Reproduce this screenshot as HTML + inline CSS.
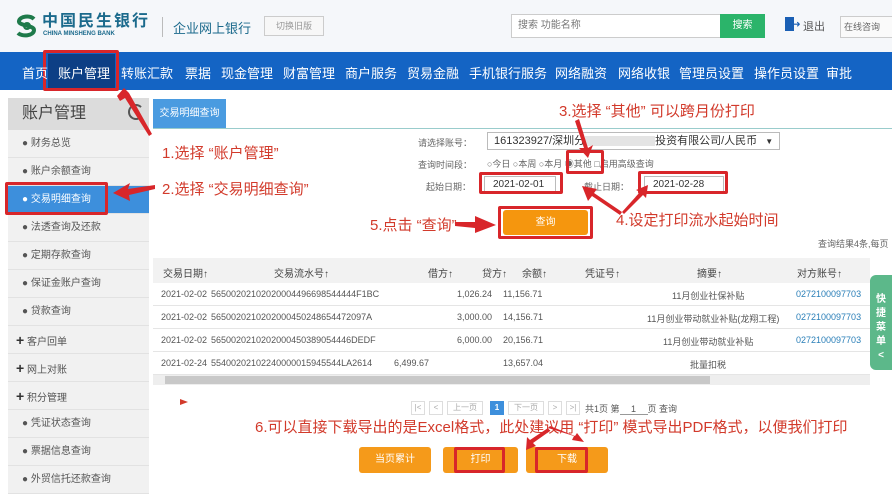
<!DOCTYPE html>
<html><head><meta charset="utf-8"><style>
*{margin:0;padding:0;box-sizing:border-box}
body{width:892px;height:483px;overflow:hidden;background:#fff;font-family:"Liberation Sans","Noto Sans CJK SC",sans-serif;position:relative;color:#555}
.a{position:absolute;white-space:nowrap}
.nav span{position:absolute;top:63px;color:#fff;font-size:13px}
.side{position:absolute;left:8px;width:141px;height:28px;border-bottom:1px solid #e2e2e2;background:#f1f1f1;font-size:10px;color:#555;padding-left:14px;line-height:28px}
.red{color:#d23a2b;font-size:15px}
.rb{position:absolute;border:3px solid #d8262a;border-radius:2px}
.th{position:absolute;top:265px;font-size:10px;color:#444}
.td{position:absolute;font-size:9px;color:#555}
.ob{position:absolute;background:#f59a1a;color:#fff;font-size:10px;text-align:center;border-radius:3px;line-height:26px}
.pg{position:absolute;top:401px;height:14px;border:1px solid #ddd;font-size:8px;color:#aaa;text-align:center;line-height:12px}
</style></head><body>
<div class="a" style="left:0;top:0;width:892px;height:52px;background:#f5f7fa"></div>
<svg class="a" style="left:14px;top:14px" width="26" height="24" viewBox="0 0 26 24"><path d="M20 5C16 1 6 2 5 7 4 12 20 11 20 16 20 22 8 23 4 19" fill="none" stroke="#1e7a4a" stroke-width="4"/><circle cx="13" cy="12" r="3" fill="none" stroke="#1e7a4a" stroke-width="2"/></svg>
<div class="a" style="left:42px;top:14px;font-size:16px;line-height:16px;font-weight:bold;color:#1b6a8c;letter-spacing:2px">中国民生银行</div>
<div class="a" style="left:43px;top:31px;font-size:6px;line-height:6px;font-weight:bold;color:#1b6a8c">CHINA MINSHENG BANK</div>
<div class="a" style="left:162px;top:17px;width:1px;height:20px;background:#bbb"></div>
<div class="a" style="left:173px;top:18px;font-size:13px;color:#1b6a8c">企业网上银行</div>
<div class="a" style="left:264px;top:16px;width:60px;height:20px;border:1px solid #ccc;background:#f7f7f7;font-size:9px;color:#999;text-align:center;line-height:18px">切换旧版</div>
<div class="a" style="left:511px;top:14px;width:210px;height:24px;border:1px solid #ccc;background:#fff;font-size:10px;color:#777;padding-left:6px;line-height:22px">搜索 功能名称</div>
<div class="a" style="left:720px;top:14px;width:45px;height:24px;background:#2bb46a;color:#fff;font-size:10px;text-align:center;line-height:24px">搜索</div>
<div class="a" style="left:785px;top:17px;width:9px;height:14px;background:#1a5fb4"></div>
<div class="a" style="left:793px;top:19px;font-size:9px;color:#1a5fb4">➜</div>
<div class="a" style="left:803px;top:18px;font-size:11px;color:#555">退出</div>
<div class="a" style="left:840px;top:16px;width:55px;height:22px;border:1px solid #ccc;background:#fafafa;font-size:9px;color:#666;padding-left:3px;line-height:20px">在线咨询</div>
<div class="a" style="left:0;top:52px;width:892px;height:38px;background:#1464c4"></div>
<div class="a" style="left:48px;top:54px;width:67px;height:34px;background:#0d3f85"></div>
<div class="rb" style="left:43px;top:50px;width:76px;height:41px"></div>
<div class="nav">
<span style="left:22px">首页</span><span style="left:58px">账户管理</span><span style="left:121px">转账汇款</span><span style="left:185px">票据</span><span style="left:221px">现金管理</span><span style="left:283px">财富管理</span><span style="left:345px">商户服务</span><span style="left:407px">贸易金融</span><span style="left:469px">手机银行服务</span><span style="left:555px">网络融资</span><span style="left:618px">网络收银</span><span style="left:679px">管理员设置</span><span style="left:754px">操作员设置</span><span style="left:826px">审批</span>
</div>
<div class="a" style="left:8px;top:98px;width:141px;height:32px;background:#dcdcdc;font-size:16px;color:#444;padding-left:14px;line-height:32px">账户管理</div>
<div class="a" style="left:128px;top:104px;width:16px;height:16px;border:2px solid #555;border-radius:50%;border-right-color:transparent"></div>
<div class="side" style="top:130px">● 财务总览</div>
<div class="side" style="top:158px">● 账户余额查询</div>
<div class="side" style="top:186px;background:#3d8fdc;color:#fff">● 交易明细查询</div>
<div class="side" style="top:214px">● 法透查询及还款</div>
<div class="side" style="top:242px">● 定期存款查询</div>
<div class="side" style="top:270px">● 保证金账户查询</div>
<div class="side" style="top:298px">● 贷款查询</div>
<div class="side" style="top:326px;padding-left:8px"><b style="font-size:14px;color:#333">+</b> 客户回单</div>
<div class="side" style="top:354px;padding-left:8px"><b style="font-size:14px;color:#333">+</b> 网上对账</div>
<div class="side" style="top:382px;padding-left:8px"><b style="font-size:14px;color:#333">+</b> 积分管理</div>
<div class="side" style="top:410px">● 凭证状态查询</div>
<div class="side" style="top:438px">● 票据信息查询</div>
<div class="side" style="top:466px">● 外贸信托还款查询</div>
<div class="rb" style="left:5px;top:182px;width:103px;height:33px"></div>
<div class="a" style="left:153px;top:99px;width:73px;height:30px;background:#4a9be0;color:#fff;font-size:10px;text-align:center;line-height:30px">交易明细查询</div>
<div class="a" style="left:153px;top:128px;width:739px;height:1px;background:#9cc"></div>
<div class="a" style="left:418px;top:136px;font-size:9px;color:#666">请选择账号：</div>
<div class="a" style="left:487px;top:132px;width:293px;height:18px;border:1px solid #bbb;font-size:11px;color:#333;padding-left:6px;line-height:16px">161323927/深圳分<span style="display:inline-block;width:70px;height:10px;background:#e4e4e4;vertical-align:middle"></span>投资有限公司/人民币<span style="font-size:8px;margin-left:8px">▼</span></div>
<div class="a" style="left:418px;top:158px;font-size:9px;color:#666">查询时间段：</div>
<div class="a" style="left:487px;top:157px;font-size:9px;color:#666">○今日 ○本周 ○本月 ◉其他 □启用高级查询</div>
<div class="a" style="left:426px;top:180px;font-size:9px;color:#666">起始日期：</div>
<div class="a" style="left:584px;top:180px;font-size:9px;color:#666">截止日期：</div>
<div class="a" style="left:484px;top:176px;width:72px;height:17px;border:1px solid #bbb;font-size:10px;color:#333;padding-left:8px;line-height:15px">2021-02-01</div>
<div class="a" style="left:644px;top:176px;width:80px;height:17px;border:1px solid #bbb;font-size:10px;color:#333;padding-left:8px;line-height:15px">2021-02-28</div>
<div class="rb" style="left:566px;top:150px;width:38px;height:24px"></div>
<div class="rb" style="left:479px;top:172px;width:84px;height:22px"></div>
<div class="rb" style="left:638px;top:171px;width:90px;height:23px"></div>
<div class="a" style="left:503px;top:210px;width:85px;height:25px;background:#f5960e;border-radius:3px;color:#fff;font-size:10px;text-align:center;line-height:25px">查询</div>
<div class="rb" style="left:498px;top:206px;width:95px;height:33px"></div>
<div class="a" style="left:818px;top:237px;font-size:9px;color:#666">查询结果4条,每页</div>
<div class="a red" style="left:162px;top:142px">1.选择 “账户管理”</div>
<div class="a red" style="left:162px;top:178px">2.选择 “交易明细查询”</div>
<div class="a red" style="left:559px;top:100px">3.选择 “其他” 可以跨月份打印</div>
<div class="a red" style="left:616px;top:209px">4.设定打印流水起始时间</div>
<div class="a red" style="left:370px;top:214px">5.点击 “查询”</div>
<div class="a" style="left:153px;top:258px;width:717px;height:25px;background:#f2f2f2"></div>
<div class="th" style="left:163px">交易日期↑</div><div class="th" style="left:274px">交易流水号↑</div><div class="th" style="left:428px">借方↑</div><div class="th" style="left:482px">贷方↑</div><div class="th" style="left:522px">余额↑</div><div class="th" style="left:585px">凭证号↑</div><div class="th" style="left:697px">摘要↑</div><div class="th" style="left:797px">对方账号↑</div>
<div class="a" style="left:153px;top:283px;width:717px;height:23px;border-bottom:1px solid #e5e5e5"></div>
<div class="a" style="left:153px;top:306px;width:717px;height:23px;border-bottom:1px solid #e5e5e5"></div>
<div class="a" style="left:153px;top:329px;width:717px;height:23px;border-bottom:1px solid #e5e5e5"></div>
<div class="a" style="left:153px;top:352px;width:717px;height:23px;border-bottom:1px solid #e5e5e5"></div>
<div class="td" style="left:161px;top:289px">2021-02-02</div><div class="td" style="left:211px;top:289px">56500202102020004496698544444F1BC</div><div class="td" style="left:457px;top:289px">1,026.24</div><div class="td" style="left:503px;top:289px">11,156.71</div><div class="td" style="left:672px;top:289px">11月创业社保补贴</div><div class="td" style="left:796px;top:289px;color:#2a7fb8">0272100097703</div>
<div class="td" style="left:161px;top:312px">2021-02-02</div><div class="td" style="left:211px;top:312px">5650020210202000450248654472097A</div><div class="td" style="left:457px;top:312px">3,000.00</div><div class="td" style="left:503px;top:312px">14,156.71</div><div class="td" style="left:647px;top:312px">11月创业带动就业补贴(龙翔工程)</div><div class="td" style="left:796px;top:312px;color:#2a7fb8">0272100097703</div>
<div class="td" style="left:161px;top:335px">2021-02-02</div><div class="td" style="left:211px;top:335px">5650020210202000450389054446DEDF</div><div class="td" style="left:457px;top:335px">6,000.00</div><div class="td" style="left:503px;top:335px">20,156.71</div><div class="td" style="left:663px;top:335px">11月创业带动就业补贴</div><div class="td" style="left:796px;top:335px;color:#2a7fb8">0272100097703</div>
<div class="td" style="left:161px;top:358px">2021-02-24</div><div class="td" style="left:211px;top:358px">55400202102240000015945544LA2614</div><div class="td" style="left:394px;top:358px">6,499.67</div><div class="td" style="left:503px;top:358px">13,657.04</div><div class="td" style="left:690px;top:358px">批量扣税</div>
<div class="a" style="left:153px;top:375px;width:717px;height:10px;background:#eee"></div>
<div class="a" style="left:165px;top:376px;width:545px;height:8px;background:#c8c8c8"></div>
<div class="a" style="left:870px;top:275px;width:22px;height:95px;background:#5cb88a;border-radius:6px 0 0 6px;color:#fff;font-size:10px;font-weight:bold;text-align:center;line-height:14px;padding-top:18px;white-space:normal">快<br>捷<br>菜<br>单<br>&lt;</div>
<div class="pg" style="left:411px;width:14px">|&lt;</div><div class="pg" style="left:429px;width:14px">&lt;</div><div class="pg" style="left:447px;width:36px">上一页</div>
<div class="pg" style="left:490px;width:14px;background:#3d8fdc;color:#fff;border-color:#3d8fdc;font-weight:bold">1</div>
<div class="pg" style="left:508px;width:36px">下一页</div><div class="pg" style="left:548px;width:14px">&gt;</div><div class="pg" style="left:566px;width:14px">&gt;|</div>
<div class="a" style="left:585px;top:402px;font-size:9px;color:#555">共1页 第<span style="display:inline-block;width:28px;border-bottom:1px solid #999;text-align:center">1</span>页 查询</div>
<div class="a" style="left:180px;top:399px;width:0;height:0;border-left:8px solid #d23a2b;border-top:3px solid transparent;border-bottom:3px solid transparent"></div>
<div class="a red" style="left:255px;top:416px">6.可以直接下载导出的是Excel格式，此处建议用 “打印” 模式导出PDF格式，以便我们打印</div>
<div class="ob" style="left:359px;top:447px;width:72px">当页累计</div>
<div class="ob" style="left:443px;top:447px;width:75px">打印</div>
<div class="ob" style="left:526px;top:447px;width:82px">下载</div>
<div class="rb" style="left:454px;top:447px;width:51px;height:26px"></div>
<div class="rb" style="left:535px;top:447px;width:53px;height:26px"></div>
<svg class="a" style="left:0;top:0" width="892" height="483" viewBox="0 0 892 483">
<g fill="#d8262a">
<path d="M117 96 L124 88 L129 93 L152 134 L149 136 L125 98 L120 101Z"/>
<path d="M113 193 L130 183 L128 189 L155 185 L155 189 L129 195 L130 201Z"/>
<path d="M575 121 L579 119 L588 148 L593 145 L588 158 L579 148 L584 148Z"/>
<path d="M455 222 L475 222 L475 216 L496 225 L475 233 L475 228 L455 226Z"/>
<path d="M620 215 L592 196 L588 201 L582 186 L597 189 L594 193 L622 212Z"/>
<path d="M622 212 L640 192 L636 190 L648 185 L646 198 L643 195 L624 214Z"/>
<path d="M548 428 L530 440 L527 437 L526 450 L536 446 L533 443 L550 431Z"/>
<path d="M548 428 L574 436 L572 440 L584 442 L577 433 L575 436 L550 426Z"/>
</g></svg>
</body></html>
